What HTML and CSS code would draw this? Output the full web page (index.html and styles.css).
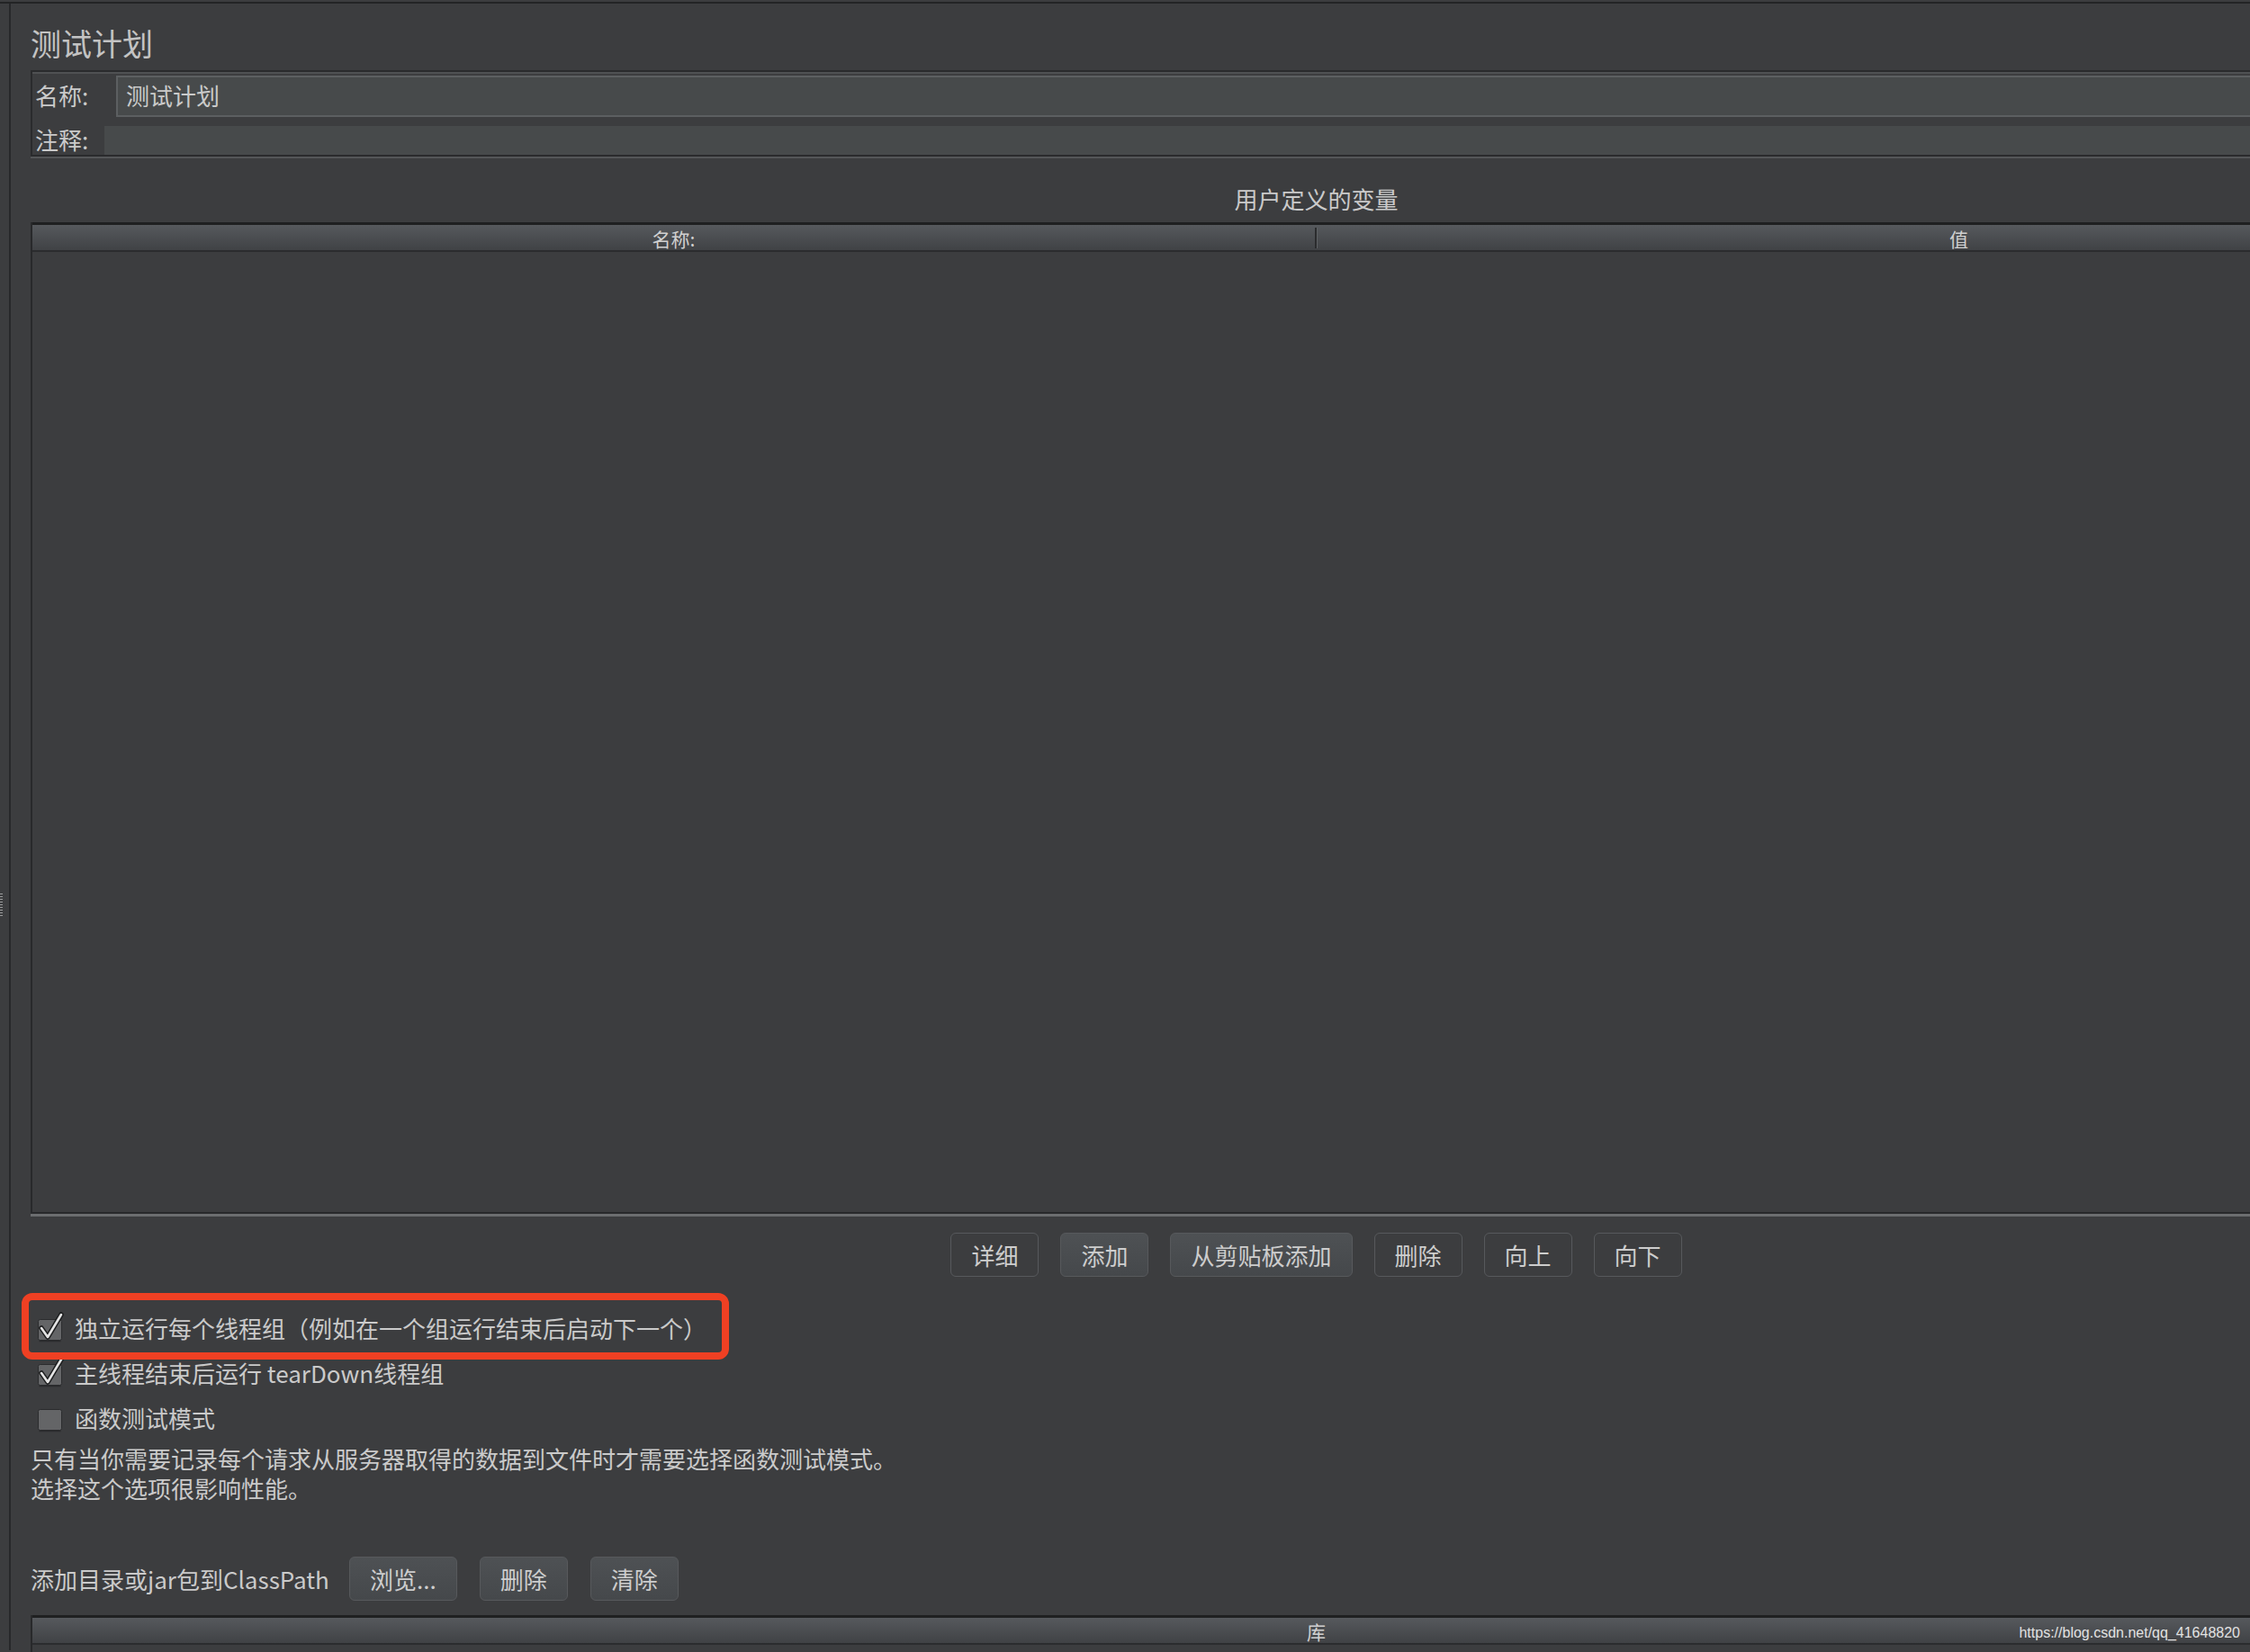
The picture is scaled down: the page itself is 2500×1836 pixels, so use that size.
FILE: index.html
```html
<!DOCTYPE html>
<html lang="zh-CN">
<head>
<meta charset="utf-8">
<title>测试计划</title>
<link rel="stylesheet" href="styles.css">
</head>
<body>
<div class="window">
  <div class="gutter"><div class="grip"></div></div>
  <div class="app">
    <div class="content">
      <h1 class="title">测试计划</h1>

      <div class="namepanel">
        <div class="frow name-row">
          <label class="flabel">名称:</label>
          <div class="field boxed">测试计划</div>
        </div>
        <div class="frow comment-row">
          <label class="flabel">注释:</label>
          <div class="field"></div>
        </div>
      </div>

      <div class="section-title">用户定义的变量</div>

      <div class="table vars">
        <div class="thead">
          <div class="th">名称:</div>
          <div class="tdiv"></div>
          <div class="th">值</div>
        </div>
        <div class="tbody"></div>
      </div>

      <div class="btnbar">
        <button class="btn">详细</button>
        <button class="btn fill">添加</button>
        <button class="btn fill">从剪贴板添加</button>
        <button class="btn">删除</button>
        <button class="btn">向上</button>
        <button class="btn">向下</button>
      </div>

      <div class="checks">
        <div class="highlight"></div>
        <div class="check">
          <svg viewBox="0 0 28 32"><rect x="0.5" y="6.5" width="26" height="23" rx="2" class="cb-box"/><line x1="1.5" y1="30.5" x2="25.5" y2="30.5" class="cb-shadow"/><path d="M4 16 L11 26 L26 1" class="cb-out"/><path d="M4 16 L11 26 L26 1" class="cb-in"/></svg>
          <span>独立运行每个线程组（例如在一个组运行结束后启动下一个）</span>
        </div>
        <div class="check">
          <svg viewBox="0 0 28 32"><rect x="0.5" y="6.5" width="26" height="23" rx="2" class="cb-box"/><line x1="1.5" y1="30.5" x2="25.5" y2="30.5" class="cb-shadow"/><path d="M4 16 L11 26 L26 1" class="cb-out"/><path d="M4 16 L11 26 L26 1" class="cb-in"/></svg>
          <span>主线程结束后运行 tearDown线程组</span>
        </div>
        <div class="check">
          <svg viewBox="0 0 28 32"><rect x="0.5" y="6.5" width="26" height="23" rx="2" class="cb-box"/><line x1="1.5" y1="30.5" x2="25.5" y2="30.5" class="cb-shadow"/></svg>
          <span>函数测试模式</span>
        </div>
      </div>

      <p class="note">只有当你需要记录每个请求从服务器取得的数据到文件时才需要选择函数测试模式。<br>选择这个选项很影响性能。</p>

      <div class="cprow">
        <span class="cplabel">添加目录或jar包到ClassPath</span>
        <button class="btn fill">浏览...</button>
        <button class="btn fill">删除</button>
        <button class="btn fill">清除</button>
      </div>

      <div class="table lib">
        <div class="thead single">
          <div class="th">库</div>
        </div>
        <div class="tbody"></div>
      </div>
    </div>
  </div>
</div>
<div class="watermark">https://blog.csdn.net/qq_41648820</div>
</body>
</html>
```

FILE: styles.css
```css
* { box-sizing: border-box; }

html, body { margin: 0; padding: 0; }

body {
  width: 2500px;
  height: 1836px;
  overflow: hidden;
  position: relative;
  background: #3c3d3f;
  color: #c8c8c8;
  font-family: "Noto Sans CJK SC", "Noto Sans", sans-serif;
}

.window {
  margin-top: 2px;
  border-top: 2px solid #232425;
  display: flex;
  height: 1832px;
}

.gutter {
  flex: 0 0 10px;
  padding-top: 989px;
}

.grip {
  width: 3px;
  height: 27px;
  background: repeating-linear-gradient(to bottom, #9a9b9c 0 1px, transparent 1px 3px);
}

.app {
  flex: 0 0 auto;
  width: 2900px;
  border-left: 2px solid #27282a;
}

.content {
  padding-left: 22px;
  width: 2879px;
}

.title {
  margin: 0;
  height: 74px;
  padding-top: 24px;
  font-size: 34px;
  line-height: 40px;
  font-weight: normal;
  color: #c3c3c3;
}

/* name / comment panel */
.namepanel {
  border-top: 2px solid #2a2b2d;
  border-bottom: 2px solid #2a2b2d;
  border-left: 2px solid #2a2b2d;
  padding-top: 4px;
  box-shadow: 0 2px 0 #545658, inset 0 2px 0 #4f5153;
}

.frow {
  display: flex;
  align-items: center;
}

.name-row { height: 46px; }

.comment-row {
  height: 32px;
  margin-top: 10px;
}

.flabel {
  flex: none;
  font-size: 26px;
  line-height: 32px;
  padding-left: 3px;
  padding-bottom: 3px;
  color: #cacaca;
}

.name-row .flabel { width: 93px; }
.comment-row .flabel { width: 80px; }

.field {
  flex: 1;
  height: 100%;
  background: #474a4b;
  font-size: 26px;
  line-height: 40px;
  padding-left: 9px;
  color: #cacaca;
}

.field.boxed { border: 2px solid #5c5f61; }

.section-title {
  height: 73px;
  padding-top: 31px;
  text-align: center;
  font-size: 26px;
  line-height: 32px;
  color: #cacaca;
}

/* tables */
.table {
  width: 2857px;
  border-left: 2px solid #28292b;
  border-right: 2px solid #28292b;
}

.vars {
  border-bottom: 2px solid #28292b;
  box-shadow: 0 3px 0 #6c6e70;
}

.thead {
  display: grid;
  grid-template-columns: 1fr 3px 1fr;
  height: 33px;
  border-top: 3px solid #1f2021;
  border-bottom: 2px solid #2b2c2e;
  background: linear-gradient(#56595d, #404245);
}

.thead.single { grid-template-columns: 1fr; }

.th {
  text-align: center;
  font-size: 21px;
  line-height: 26px;
  padding-top: 2px;
  color: #d0d0d0;
}

.tdiv {
  margin: 3px 0 2px;
  background: linear-gradient(to right, #2a2b2d 0 2px, #5e6164 2px 3px);
}

.vars .tbody { height: 1067px; }
.lib .tbody { height: 60px; }

/* buttons */
.btnbar {
  display: flex;
  justify-content: center;
  gap: 24px;
  margin-top: 21px;
}

.btn {
  height: 49px;
  padding: 0 22px;
  border: 1px solid #57595c;
  border-radius: 6px;
  background: transparent;
  color: #cdcdcd;
  font: 26px/47px "Noto Sans CJK SC", "Noto Sans", sans-serif;
  white-space: nowrap;
}

.btn.fill { background: linear-gradient(#4e5154, #45484b); }

/* checkboxes */
.checks {
  position: relative;
  margin-top: 32px;
}

.check {
  display: flex;
  align-items: center;
  height: 50px;
  padding-left: 8px;
}

.check svg {
  flex: none;
  width: 28px;
  height: 32px;
  margin-right: 13px;
  overflow: visible;
}

.cb-box { fill: #646567; stroke: #2b2c2e; }
.cb-shadow { stroke: #2a2b2d; stroke-width: 1.5; }
.cb-out { fill: none; stroke: #1c1d1e; stroke-width: 5.5; stroke-linecap: round; stroke-linejoin: round; }
.cb-in { fill: none; stroke: #e4e4e4; stroke-width: 2.6; stroke-linecap: round; stroke-linejoin: round; }

.check span {
  font-size: 26px;
  line-height: 32px;
  color: #cacaca;
  white-space: nowrap;
}

.highlight {
  position: absolute;
  left: -10px;
  top: -14px;
  width: 786px;
  height: 74px;
  border: 8px solid #ef4023;
  border-radius: 12px;
}

.note {
  margin: 4px 0 0;
  font-size: 26px;
  line-height: 32.5px;
  color: #cacaca;
}

/* classpath row */
.cprow {
  display: flex;
  align-items: center;
  height: 49px;
  margin-top: 60px;
}

.cplabel {
  flex: 0 0 354px;
  font-size: 26px;
  line-height: 32px;
  color: #cacaca;
  white-space: nowrap;
}

.cprow .btn + .btn { margin-left: 25px; }

.lib { margin-top: 16px; }

.watermark {
  position: absolute;
  top: 1806px;
  right: 11px;
  font: 16px/18px "Liberation Sans", Arial, sans-serif;
  color: #e2e2e2;
  white-space: nowrap;
}
```
